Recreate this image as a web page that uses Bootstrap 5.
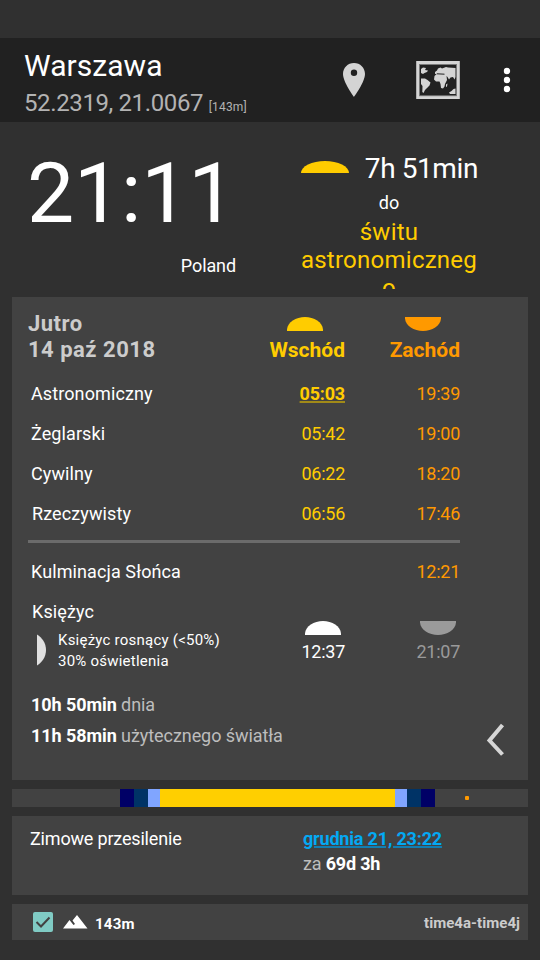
<!DOCTYPE html>
<html lang="pl">
<head>
<meta charset="utf-8">
<meta name="viewport" content="width=device-width, initial-scale=1">
<title>Warszawa</title>
<link href="https://cdn.jsdelivr.net/npm/bootstrap@5.3.0/dist/css/bootstrap.min.css" rel="stylesheet">
<style>
body{background:#303030;color:#fff;font-family:Roboto,"Noto Sans",sans-serif;font-size:18px;line-height:24px;width:540px;height:960px;overflow:hidden}
svg{display:block;flex:none}
.topbar{background:#212121;height:84px;margin-top:38px;padding:10px 0 0 24px}
.city{font-size:30px;line-height:36px;letter-spacing:.05px}
.coords{font-size:24px;line-height:28px;margin-top:5px;color:#b3b3b3;letter-spacing:-.38px}
.alt{font-size:12px;color:#b3b3b3;letter-spacing:.18px}
.hero{height:175px;padding:22px 0 0 27px}
.clock{font-size:84px;line-height:100px;letter-spacing:-.2px}
.left-col{width:209px}
.country{margin-top:10px;letter-spacing:-.1px}
.next-col{width:178px;margin:9px 0 0 64px}
.remain{font-size:28px;line-height:32px;letter-spacing:-.4px}
.until{margin-top:6px}
.event{font-size:24px;line-height:28px;height:72px;margin-top:2px;padding-top:1px;letter-spacing:.25px;color:#fc0;overflow:hidden;overflow-wrap:anywhere}
.sun{color:#fc0}.dusk{color:#f90}.dim{color:#9a9a9a}.soft{color:#bdbdbd}.light{color:#ccc}
.panel{background:#424242;margin:0 12px}
.day{height:483px;padding:14px 22px 0 16px}
.times{display:grid;grid-template-columns:202px 115px 115px;width:432px}
.times>.num{text-align:right;line-height:40px;letter-spacing:-.25px}
.line{line-height:40px;padding-left:3px;letter-spacing:.1px}
.line.inset{padding-left:4px}
.date{font-size:22px;line-height:26px;height:63px;font-weight:700;letter-spacing:.5px}
.head{font-size:21px;font-weight:700;padding-top:6px}
.head svg{margin-left:auto;margin-bottom:7px}
.now{font-weight:700;letter-spacing:-.2px;text-decoration:underline;text-decoration-color:#a18a18;text-decoration-thickness:2px;text-underline-offset:1px}
.rule{height:3px;background:#6b6b6b;margin:6px 0 9px}
.moon-title{line-height:37px;padding:1px 0 0 4px;letter-spacing:.1px}
.phase{font-size:15px;line-height:21px;letter-spacing:.23px;padding-left:9px;gap:11px}
.rise{padding-top:29px;line-height:24px;letter-spacing:-.25px}
.rise svg{margin:0 4px 5px auto}
.totals{line-height:31px;padding-left:3px;margin-top:17px;letter-spacing:-.07px}
.strip{height:18px;margin-top:9px;margin-bottom:9px}
.dot{width:4px;height:4px;border-radius:1px;background:#f90;margin-left:30px}
.solstice{height:79px;padding:11px 0 0 18px;letter-spacing:-.18px}
.solstice .what{width:273px}
.solstice .when{line-height:25px;margin-top:-1px}
.bl{color:#03a9f4;text-decoration:underline;text-decoration-color:#117fb3;text-decoration-thickness:2px;text-underline-offset:1px}
.foot{height:36px;margin-top:9px;padding:0 8px 0 21px;font-size:15px;font-weight:700}
.height-value{letter-spacing:.25px;margin-left:6px;padding-top:3px}
.brand{padding-top:2px;letter-spacing:.05px}
</style>
<script src="https://cdn.jsdelivr.net/npm/bootstrap@5.3.0/dist/js/bootstrap.bundle.min.js"></script>
</head>
<body class="d-flex flex-column">
<header class="topbar d-flex flex-shrink-0">
  <div class="flex-grow-1">
    <div class="city">Warszawa</div>
    <div class="coords"><span>52.2319, 21.0067</span> <span class="alt">[143m]</span></div>
  </div>
  <svg width="200" height="60" viewBox="340 48 200 60">
    <path fill="#d4d4d4" fill-rule="evenodd" d="M354 63C347.800 63 343 67.800 343 74C343 82 354 97 354 97S365 82 365 74C365 67.800 360.200 63 354 63ZM354 69.500a3.200 3.200 0 1 1 0 6.400a3.200 3.200 0 1 1 0-6.400Z"/>
    <rect x="417.700" y="62.500" width="40.600" height="35" fill="none" stroke="#d4d4d4" stroke-width="3"/>
    <rect x="419.500" y="64.500" width="37" height="31.200" fill="none" stroke="#7a7a7a" stroke-width="1"/>
    <g fill="#d4d4d4">
      <path d="M421 69L423 67.500L426 68L425 70L428 70.500L427 72L424.500 73L423 74L421 73Z"/>
      <path d="M421 78.500L425 78.500L427.500 80L430.500 82.500L429.500 85.500L427 88L425 90L423.500 93L422.300 92L422.500 86L421 84Z"/>
      <path d="M435 72L437 70.500L438 68.500L440.500 67.500L442 68.500L446 67L448 67.500L455.500 68V77L454.500 79.500L453 77L450.500 77.500L449 79.500L447.500 77L446.500 76L447 80L445 84L444.500 86.500L443 88.500L441 88L440.500 84L439.500 81.500L436 81.500L434 79.500L434.500 76L437 73.800L435 74Z"/>
      <path d="M446 84.500L447.500 83.500L447 86.500L446 87Z M449 92.500L451.500 91L453.500 89L455.500 88.500V94H450Z"/>
    </g>
    <path d="M437 73.800L444.500 74.200" stroke="#212121" stroke-width="1"/>
    <g fill="#fff"><circle cx="507" cy="71" r="3.200"/><circle cx="507" cy="80" r="3.200"/><circle cx="507" cy="89" r="3.200"/></g>
  </svg>
</header>

<section class="hero d-flex flex-shrink-0">
  <div class="left-col">
    <div class="clock">21:11</div>
    <div class="country text-end">Poland</div>
  </div>
  <div class="next-col">
    <div class="d-flex justify-content-between">
      <svg width="50" height="20" viewBox="0 0 50 20"><path class="sun" fill="currentColor" d="M1 20A24 12 0 0 1 49 20Z"/></svg>
      <div class="remain text-nowrap">7h 51min</div>
    </div>
    <div class="until text-center">do</div>
    <div class="event text-center">świtu astronomicznego</div>
  </div>
</section>

<main class="panel day d-flex justify-content-between flex-shrink-0">
  <div>
    <div class="times">
      <div class="date light">Jutro<br>14 paź 2018</div>
      <div class="head sun text-end"><svg width="58" height="14" viewBox="0 0 58 14"><path fill="currentColor" d="M0 14V12.500C0.500 5 9 0 18 0S35.500 5 36 12.500V14Z"/></svg>Wschód</div>
      <div class="head dusk text-end"><svg width="55" height="14" viewBox="0 0 55 14"><path fill="currentColor" d="M0 0V1.500C0.500 9 9 14 18 14S35.500 9 36 1.500V0Z"/></svg>Zachód</div>
      <div class="line">Astronomiczny</div><div class="num sun"><span class="now">05:03</span></div><div class="num dusk">19:39</div>
      <div class="line">Żeglarski</div><div class="num sun">05:42</div><div class="num dusk">19:00</div>
      <div class="line">Cywilny</div><div class="num sun">06:22</div><div class="num dusk">18:20</div>
      <div class="line inset">Rzeczywisty</div><div class="num sun">06:56</div><div class="num dusk">17:46</div>
    </div>
    <div class="rule"></div>
    <div class="times">
      <div class="line">Kulminacja Słońca</div><div></div><div class="num dusk">12:21</div>
      <div>
        <div class="moon-title">Księżyc</div>
        <div class="phase d-flex text-nowrap">
          <svg width="10" height="42" viewBox="0 0 10 42"><path fill="#e0e0e0" d="M0 4.500C5 7.500 9 13 9 20S5 32.500 0 35.500Z"/></svg>
          <div>Księżyc rosnący (&lt;50%)<br>30% oświetlenia</div>
        </div>
      </div>
      <div class="rise text-end"><svg width="36" height="14" viewBox="0 0 36 14"><path fill="#fff" d="M0 14V12.500C0.500 5 9 0 18 0S35.500 5 36 12.500V14Z"/></svg>12:37</div>
      <div class="rise text-end dim"><svg width="36" height="14" viewBox="0 0 36 14"><path fill="currentColor" d="M0 0V1.500C0.500 9 9 14 18 14S35.500 9 36 1.500V0Z"/></svg>21:07</div>
    </div>
    <div class="totals">
      <div><b>10h 50min</b> <span class="soft">dnia</span></div>
      <div><b>11h 58min</b> <span class="soft">użytecznego światła</span></div>
    </div>
  </div>
  <svg class="align-self-end mb-4" width="20" height="34" viewBox="0 0 20 34"><path d="M16.500 3.500L3.500 19L16.500 33" transform="translate(0 -.5)" fill="none" stroke="#d6d6d6" stroke-width="4"/></svg>
</main>

<div class="panel strip d-flex flex-shrink-0 align-items-center">
  <svg width="423" height="18" viewBox="0 0 423 18" shape-rendering="crispEdges">
    <path fill="#006" d="M108 0h14v18h-14zM409 0h14v18h-14z"/>
    <path fill="#036" d="M122 0h14v18h-14zM395 0h14v18h-14z"/>
    <path fill="#80a5ff" d="M136 0h12v18h-12zM383 0h12v18h-12z"/>
    <path fill="#ffcf00" d="M148 0h235v18h-235z"/>
  </svg>
  <div class="dot"></div>
</div>

<section class="panel solstice d-flex flex-shrink-0">
  <div class="what">Zimowe przesilenie</div>
  <div class="when"><a class="bl fw-bold" href="#">grudnia 21, 23:22</a><br><span class="soft">za</span> <b>69d 3h</b></div>
</section>

<footer class="panel foot d-flex align-items-center flex-shrink-0">
  <svg width="20" height="20" viewBox="0 0 20 20"><rect width="20" height="20" rx="2" fill="#80cbc4"/><path d="M3.500 10L8 14.500L16.500 5.500" fill="none" stroke="#424242" stroke-width="2"/></svg>
  <svg class="ms-2" width="28" height="20" viewBox="0 0 28 20"><path fill="#fff" d="M2 16.500L8.500 8L12.500 13L14 12L11.500 8.500L16 3L26.500 16.500Z"/></svg>
  <div class="height-value flex-grow-1">143m</div>
  <div class="brand light">time4a-time4j</div>
</footer>
</body>
</html>
